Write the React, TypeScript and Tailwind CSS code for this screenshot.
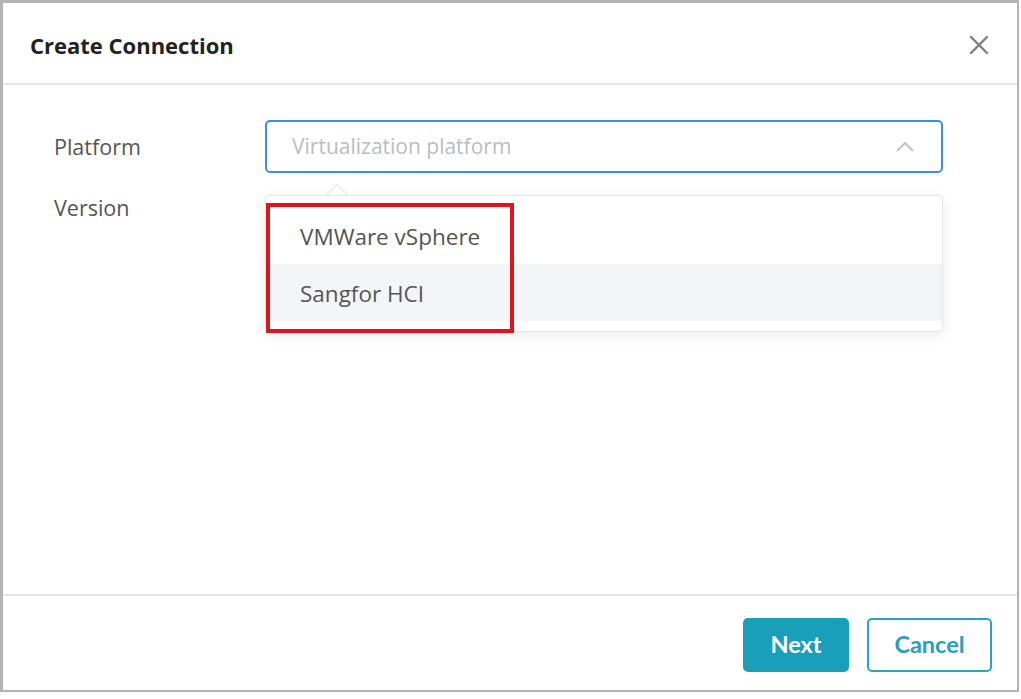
import React from "react";

export default function App() {
  return (
    <div className="w-[1021px] h-[699px] bg-white">
      <div
        className="w-[1019px] h-[692px] border-t-[3px] border-l-[3px] border-r-2 border-b-2 border-[#b4b4b4] bg-white flex flex-col"
        style={{ fontFamily: '"Open Sans", "Noto Sans", sans-serif' }}
      >
        {/* Header */}
        <div className="h-[82px] shrink-0 flex items-center justify-between pl-[27px] pr-[28px] pt-[5px] border-b-2 border-[#e6e6e6]">
          <div className="text-[22px] font-bold text-[#222] tracking-[0px]">Create Connection</div>
          <svg width="20" height="20" viewBox="0 0 20 20" className="mt-[-2px]">
            <path d="M2 2 L18 18 M18 2 L2 18" stroke="#7f7f7f" strokeWidth="2.4" strokeLinecap="round" />
          </svg>
        </div>

        {/* Body */}
        <div className="flex-1 relative pt-[35px] pl-[51px] pr-[74px]">
          <div className="flex items-center">
            <div className="w-[211px] text-[21.5px] text-[#555] pt-[1px]">Platform</div>
            <div className="flex-1 relative">
              <div className="h-[53px] border-2 border-[#3d8fe6] rounded-[5px] flex items-center justify-between pl-[25px] pr-[26px]">
                <span className="text-[21px] text-[#b9bdc4] pt-[1px]">Virtualization platform</span>
                <svg width="20" height="12" viewBox="0 0 20 12">
                  <path d="M2 10 L10 2 L18 10" stroke="#c4c4c4" strokeWidth="2" fill="none" />
                </svg>
              </div>
              {/* Dropdown */}
              <div className="absolute left-0 right-0 top-[75px] z-10">
                <div className="absolute left-[64px] top-[-8px] w-[16px] h-[16px] rotate-45 bg-white border-l border-t border-[#e8e8e8]" />
                <div className="relative bg-white border border-[#e6e6e6] rounded-[5px] shadow-[0_4px_14px_rgba(0,0,0,0.08)] pt-[9px] pb-[10px]">
                  <div className="h-[59px] flex items-center pl-[34px] pt-[4px] text-[22.5px] text-[#555]">VMWare vSphere</div>
                  <div className="h-[57px] flex items-center pl-[34px] pt-[3px] text-[22.5px] text-[#555] bg-[#f3f6f9]">Sangfor HCI</div>
                </div>
                <div className="absolute left-[1px] top-[8px] w-[248px] h-[130px] border-[4px] border-[#e0131d]" />
              </div>
            </div>
          </div>
          <div className="flex items-center mt-[9px] h-[53px]">
            <div className="w-[211px] text-[21.5px] text-[#555]">Version</div>
          </div>
        </div>

        {/* Footer */}
        <div className="h-[96px] shrink-0 border-t-2 border-[#e6e6e6] flex items-center justify-end gap-[18px] pr-[25px] pt-[3px]" style={{ fontFamily: 'Lato, "Open Sans", sans-serif' }}>
          <button className="w-[106px] h-[54px] rounded-[5px] bg-[#1a9fbb] text-white text-[23.5px] font-bold">Next</button>
          <button className="w-[125px] h-[54px] rounded-[5px] border-2 border-[#2aa3bf] text-[#2a9fbb] text-[23.5px] font-bold bg-white">Cancel</button>
        </div>
      </div>
    </div>
  );
}
